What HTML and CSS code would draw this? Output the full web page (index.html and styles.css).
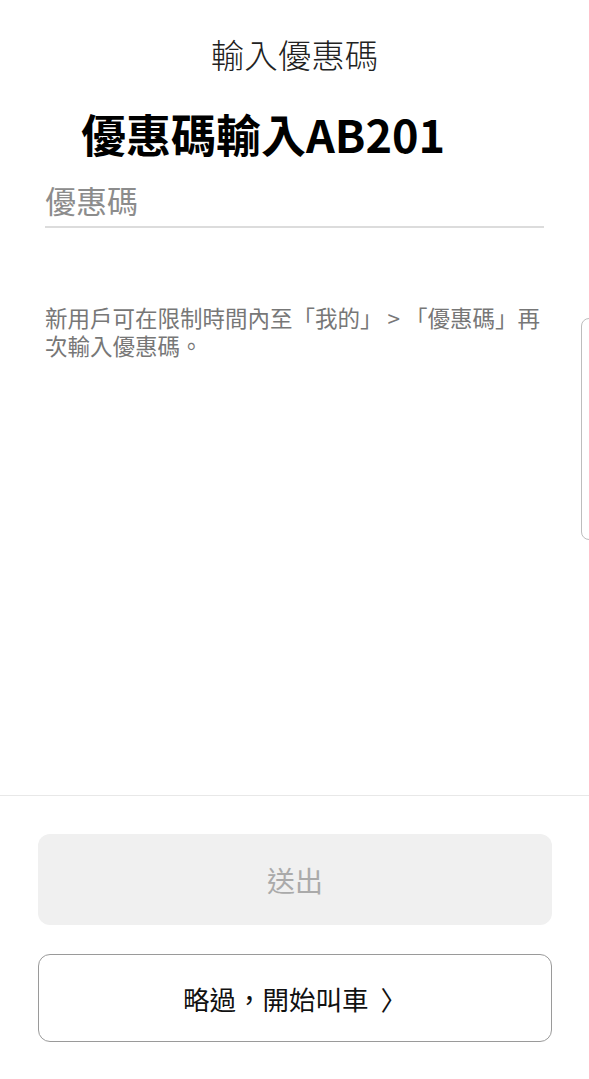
FILE: index.html
```html
<!DOCTYPE html>
<html lang="zh-Hant">
<head>
  <meta charset="UTF-8">
  <title>輸入優惠碼</title>
  <link rel="stylesheet" href="styles.css">
</head>
<body>

  <div class="page">
    <header class="top-bar">
      <h1>輸入優惠碼</h1>
    </header>

    <main class="content">
      <h2 class="promo-title">優惠碼輸入AB201</h2>
      <input type="text" class="promo-input" placeholder="優惠碼" />
      <p class="hint">新用戶可在限制時間內至「我的」 &gt; 「優惠碼」再次輸入優惠碼。</p>
    </main>

    <footer class="actions">
      <button class="btn btn-submit" disabled>送出</button>
      <button class="btn btn-skip">略過，開始叫車 <span class="chevron">〉</span></button>
    </footer>

    <div class="side-tab"></div>
  </div>

</body>
</html>
```

FILE: styles.css
```css
body {
  margin: 0;
  padding: 0;
  background: #fff;
  color: #222;
  font-family: "Noto Sans CJK TC", "Noto Sans", sans-serif;
}
.page {
  position: relative;
  height: 1079px;
  display: flex;
  flex-direction: column;
  overflow: hidden;
}
.top-bar {
  padding-top: 31px;
  text-align: center;
}
.top-bar h1 {
  margin: 0;
  font-size: 33.5px;
  line-height: 46px;
  font-weight: 300;
  color: #222;
}
.content {
  flex: 1;
  padding: 0 45px;
}
.promo-title {
  margin: 28px 0 0 36px;
  font-size: 45px;
  line-height: 58px;
  font-weight: 700;
  color: #000;
}
.promo-input {
  display: block;
  width: 100%;
  box-sizing: border-box;
  margin-top: 14px;
  padding: 0 0 5px;
  border: none;
  border-bottom: 2px solid #dcdcdc;
  outline: none;
  font-family: inherit;
  font-size: 31px;
  line-height: 44px;
  height: 51px;
}
.promo-input::placeholder {
  color: #8c8c8c;
}
.hint {
  margin: 75px 0 0;
  font-size: 22.5px;
  line-height: 28px;
  color: #777;
}
.actions {
  border-top: 1px solid #e8e8e8;
  padding: 38px 37px 37px 38px;
  display: flex;
  flex-direction: column;
  gap: 29px;
}
.btn {
  display: block;
  width: 100%;
  border-radius: 12px;
  font-family: inherit;
  cursor: pointer;
}
.btn-submit {
  height: 91px;
  background: #f0f0f0;
  border: none;
  color: #aaa;
  font-size: 28px;
}
.btn-skip {
  height: 88px;
  background: #fff;
  border: 1.5px solid #9a9a9a;
  color: #111;
  font-size: 26.5px;
}
.chevron {
  margin-left: 6px;
}
.side-tab {
  position: absolute;
  left: 581px;
  top: 318px;
  width: 30px;
  height: 220px;
  border: 1px solid #bdbdbd;
  border-radius: 8px;
}
```
